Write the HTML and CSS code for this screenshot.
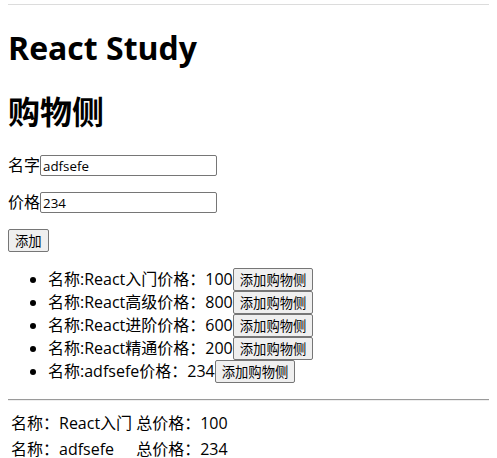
FILE: index.html
```html
<!DOCTYPE html>
<html lang="zh">
<head>
<meta charset="utf-8">
<title>React Study</title>
<link rel="stylesheet" href="styles.css">
</head>
<body>
<div class="topline"></div>
<div id="root">
  <h1 class="title">React Study</h1>
  <div class="shop">
    <h1 class="title">购物侧</h1>
    <p class="field"><label>名字</label><input class="inp" type="text" value="adfsefe"></p>
    <p class="field"><label>价格</label><input class="inp" type="text" value="234"></p>
    <p class="field"><button class="btn">添加</button></p>
    <ul class="list">
      <li>名称:React入门价格：100<button class="btn">添加购物侧</button></li>
      <li>名称:React高级价格：800<button class="btn">添加购物侧</button></li>
      <li>名称:React进阶价格：600<button class="btn">添加购物侧</button></li>
      <li>名称:React精通价格：200<button class="btn">添加购物侧</button></li>
      <li>名称:adfsefe价格：234<button class="btn">添加购物侧</button></li>
    </ul>
    <hr class="sep">
    <table class="cart">
      <tbody>
        <tr><td>名称：React入门</td><td>总价格：100</td></tr>
        <tr><td>名称：adfsefe</td><td>总价格：234</td></tr>
      </tbody>
    </table>
  </div>
</div>
</body>
</html>
```
FILE: styles.css
```css
html {
  background: #fff;
  overflow: hidden;
}
body {
  margin: 0 8px;
  font-family: "Open Sans", "Noto Sans CJK SC", sans-serif;
  font-size: 16px;
  line-height: 21px;
  color: #000;
}
.topline {
  height: 4px;
  border-bottom: 1px solid #dcdcdc;
  margin: 0 -8px;
}
.title {
  font-size: 32px;
  font-weight: bold;
  line-height: 42px;
  margin: 22px 0;
}
.field {
  margin: 16px 0;
  display: flex;
  align-items: center;
}
.inp {
  font-family: "Open Sans", "Noto Sans CJK SC", sans-serif;
  font-size: 13.33px;
  width: 171px;
  height: 17px;
  padding: 1px 2px;
  border: 1px solid #767676;
  border-radius: 2px;
  margin: 0;
}
.btn {
  font-family: "Noto Sans CJK SC", sans-serif;
  font-size: 13.33px;
  line-height: 19px;
  padding: 1px 6px;
  border: 1px solid #767676;
  border-radius: 2px;
  background: #efefef;
  color: #000;
  margin: 0;
}
.list {
  margin: 16px 0;
  padding-left: 40px;
}
.list li {
  line-height: 23px;
}
.sep {
  box-sizing: border-box;
  width: calc(100% + 8px);
  margin: 8px 0;
  border: none;
  border-top: 1px solid #9a9a9a;
  border-bottom: 1px solid #eee;
}
.cart td {
  padding: 1px;
  line-height: 22px;
}
```
